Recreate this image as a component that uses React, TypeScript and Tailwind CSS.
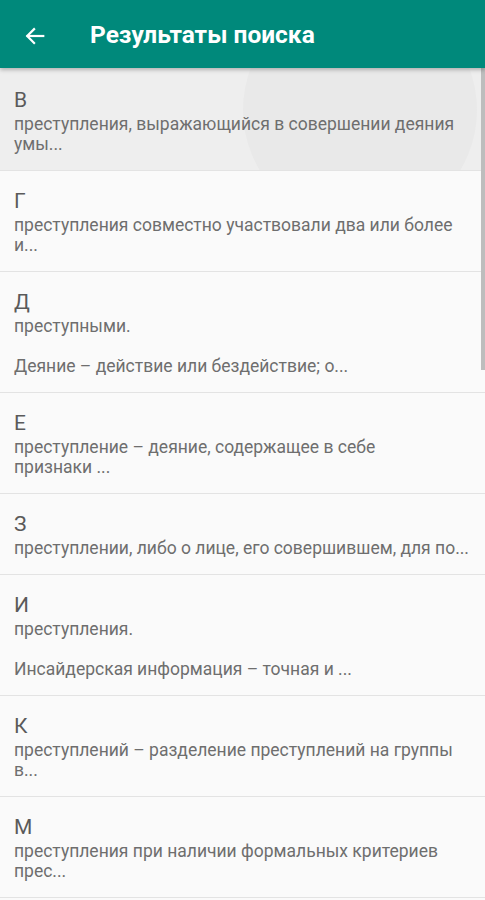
import React from 'react';

type Item = { letter: string; lines: string[] };

const items: Item[] = [
  { letter: 'В', lines: ['преступления, выражающийся в совершении деяния', 'умы...'] },
  { letter: 'Г', lines: ['преступления совместно участвовали два или более', 'и...'] },
  { letter: 'Д', lines: ['преступными.', '', 'Деяние – действие или бездействие; о...'] },
  { letter: 'Е', lines: ['преступление – деяние, содержащее в себе', 'признаки ...'] },
  { letter: 'З', lines: ['преступлении, либо о лице, его совершившем, для по...'] },
  { letter: 'И', lines: ['преступления.', '', 'Инсайдерская информация – точная и ...'] },
  { letter: 'К', lines: ['преступлений – разделение преступлений на группы', 'в...'] },
  { letter: 'М', lines: ['преступления при наличии формальных критериев', 'прес...'] },
];

const ResultRow: React.FC<{ item: Item; pressed?: boolean }> = ({ item, pressed }) => (
  <div
    className={
      'relative overflow-hidden border-b border-[#e3e3e3] px-[14px] pb-4 ' +
      (pressed ? 'bg-[#eeeeee] pt-[18px]' : 'bg-[#fafafa] pt-4')
    }
  >
    {pressed && (
      <div className="absolute left-[243px] top-[-75px] h-[234px] w-[234px] rounded-full bg-[#e9e9e9]" />
    )}
    <div className="relative">
      <div className="text-[21px] leading-[28px] text-[#5a5a5a]">{item.letter}</div>
      {item.lines.map((l, i) => (
        <div key={i} className="h-5 text-[17.5px] leading-5 text-[#6e6e6e] whitespace-nowrap">
          {l}
        </div>
      ))}
    </div>
  </div>
);

export default function App() {
  return (
    <div
      className="relative h-[900px] w-[485px] overflow-hidden bg-[#fafafa]"
      style={{ fontFamily: 'Roboto, "Noto Sans", sans-serif' }}
    >
      <header className="relative z-10 flex h-[68px] items-center bg-[#00897b] pt-[3px] shadow-[0_2px_4px_rgba(0,0,0,0.25)]">
        <div className="flex w-[90px] items-center pl-[24px]">
          <svg width="22" height="22" viewBox="0 0 24 24" fill="none" stroke="white" strokeWidth="2.4" strokeLinecap="square">
            <path d="M21 12H4" />
            <path d="M11 4.5L3.5 12l7.5 7.5" />
          </svg>
        </div>
        <h1 className="text-[24.5px] font-bold text-white">Результаты поиска</h1>
      </header>
      <div>
        {items.map((it, i) => (
          <ResultRow key={it.letter} item={it} pressed={i === 0} />
        ))}
      </div>
      <div className="absolute right-0 top-[68px] h-[302px] w-[4px] bg-[#bdbdbd]" />
    </div>
  );
}
